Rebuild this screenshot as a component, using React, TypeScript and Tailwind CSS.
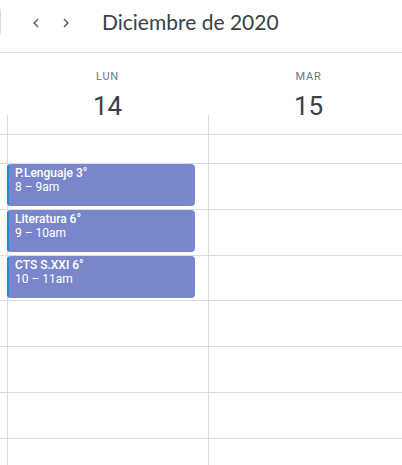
import React from "react";

const days = [
  { name: "LUN", num: "14" },
  { name: "MAR", num: "15" },
];

const events: Record<number, { title: string; time: string }> = {
  0: { title: "P.Lenguaje 3°", time: "8 – 9am" },
  1: { title: "Literatura 6°", time: "9 – 10am" },
  2: { title: "CTS S.XXI 6°", time: "10 – 11am" },
};

function ChevronLeft() {
  return (
    <svg width="18" height="18" viewBox="0 0 24 24" fill="#5f6368">
      <path d="M15.41 7.41L14 6l-6 6 6 6 1.41-1.41L10.83 12z" />
    </svg>
  );
}

function ChevronRight() {
  return (
    <svg width="18" height="18" viewBox="0 0 24 24" fill="#5f6368">
      <path d="M8.59 16.59L10 18l6-6-6-6-1.41 1.41L13.17 12z" />
    </svg>
  );
}

export default function App() {
  const rows = [0, 1, 2, 3, 4, 5, 6];
  return (
    <div
      className="w-[402px] h-[465px] overflow-hidden bg-white"
      style={{ fontFamily: "Roboto, 'Liberation Sans', sans-serif" }}
    >
      {/* Top bar */}
      <div className="h-[53px] border-b border-[#e3e4e8] flex items-start">
        <div className="w-[10px] h-[30px] mt-[7px] -ml-[9px] border border-[#dadce0] rounded-[4px] shrink-0" />
        <div className="ml-[26px] mt-[13.5px] flex shrink-0">
          <ChevronLeft />
          <div className="w-[12px]" />
          <ChevronRight />
        </div>
        <div
          className="ml-[27px] mt-[6px] text-[21px] leading-[32px] text-[#3c4043] whitespace-nowrap"
          style={{ fontFamily: "Lato, Roboto, sans-serif" }}
        >
          Diciembre de 2020
        </div>
      </div>

      {/* Day header */}
      <div className="flex border-b border-[#dadce0] w-[409px]">
        <div className="w-[7px] shrink-0" />
        {days.map((d) => (
          <div key={d.name} className="w-[201px] shrink-0 flex flex-col">
            <div className="h-[62px] flex flex-col items-center">
              <div className="mt-[16px] text-[11px] leading-[16px] tracking-[0.8px] text-[#70757a]">
                {d.name}
              </div>
              <div className="mt-[7.5px] text-[26px] leading-none text-[#3c4043]">
                {d.num}
              </div>
            </div>
            <div className="h-[19px] border-l border-[#dadce0]" />
          </div>
        ))}
      </div>

      {/* All-day row */}
      <div className="flex border-b border-[#dadce0] w-[409px] h-[29px]">
        <div className="w-[7px] shrink-0" />
        {days.map((d) => (
          <div key={d.name} className="w-[201px] shrink-0 border-l border-[#dadce0]" />
        ))}
      </div>

      {/* Hour rows */}
      {rows.map((r) => (
        <div key={r} className="flex border-b border-[#dadce0] w-[409px] h-[45.75px]">
          <div className="w-[7px] shrink-0" />
          {days.map((d, di) => (
            <div key={d.name} className="w-[201px] shrink-0 border-l border-[#dadce0] relative">
              {di === 0 && events[r] && (
                <div className="absolute left-[-1px] top-0 w-[188px] h-[42px] bg-[#7986cb] rounded-[4px] overflow-hidden flex">
                  <div className="w-[2px] bg-[#1e88e5] shrink-0" />
                  <div className="pl-[6px] pt-[2px] text-white text-[12px] leading-[14px]">
                    <div className="font-medium">{events[r].title}</div>
                    <div>{events[r].time}</div>
                  </div>
                </div>
              )}
            </div>
          ))}
        </div>
      ))}
    </div>
  );
}
